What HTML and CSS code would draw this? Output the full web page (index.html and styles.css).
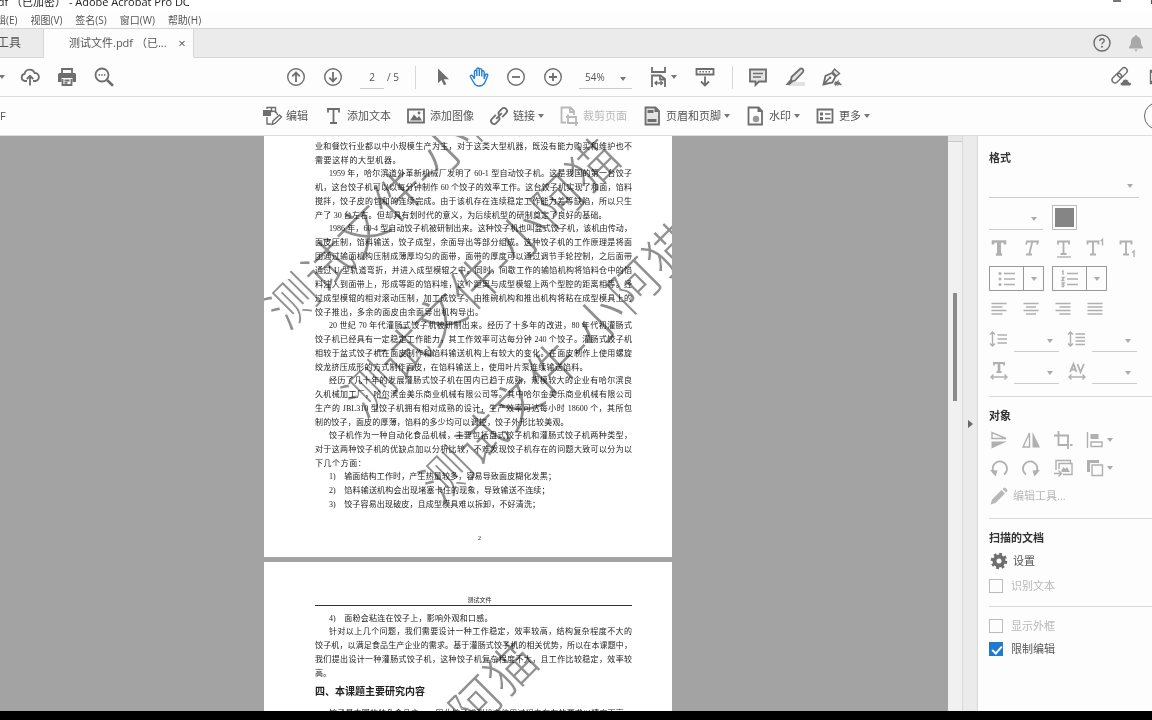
FILE: index.html
```html
<!DOCTYPE html>
<html lang="zh-CN">
<head>
<meta charset="utf-8">
<title>测试文件.pdf (已加密) - Adobe Acrobat Pro DC</title>
<link rel="stylesheet" href="styles.css">
</head>
<body>
<div class="app">
  <header class="titlebar">
    <span class="title">pdf （已加密） - Adobe Acrobat Pro DC</span>
    <span class="win"><i class="min"></i><i class="max"></i></span>
  </header>
  <nav class="menubar">
    <a href="#">辑(E)</a><a href="#">视图(V)</a><a href="#">签名(S)</a><a href="#">窗口(W)</a><a href="#">帮助(H)</a>
  </nav>
  <div class="tabbar">
    <button class="tab tools">工具</button>
    <div class="tab file"><span>测试文件.pdf （已...</span><button class="close" aria-label="关闭">×</button></div>
    <div class="account">
      <button class="ib" aria-label="帮助"><svg width="20" height="20" viewBox="0 0 20 20"><circle cx="10" cy="10" r="8" class="s"/><path class="s" d="M7.800 8q0-2.200 2.200-2.200T12.200 7.800q0 1-1.200 1.700-1 .6-1 1.800"/><circle cx="10" cy="13.800" r="1" class="f"/></svg></button>
      <button class="ib pale" aria-label="通知"><svg width="20" height="20" viewBox="0 0 20 20"><path class="f" d="M10 2q1.300 0 1.300 1.500Q15 4.500 15 9q0 4 2 5.500V15.500H3V14.500Q5 13 5 9q0-4.500 3.700-5.500Q8.700 2 10 2zM8 16.500h4L10 18.500z"/></svg></button>
    </div>
  </div>

  <div class="toolbar">
    <div class="group left">
      <button class="star caret" aria-label="收藏"></button>
      <button class="ib" aria-label="上传"><svg width="20" height="20" viewBox="0 0 20 20"><path class="s2" d="M7 14H4.800A3.600 3.600 0 0 1 4.600 6.900 5.200 5.200 0 0 1 14.600 6 4 4 0 0 1 15.200 14H13M10 18.500V9M6.800 12 10 8.800 13.200 12"/></svg></button>
      <button class="ib" aria-label="打印"><svg width="20" height="20" viewBox="0 0 20 20"><path class="s2" d="M5 6V2h10v4M5.500 12v6h9v-6M7.500 13.500h5M7.500 15.800h3"/><path class="f" d="M1 7.500Q1 6 2.500 6h15Q19 6 19 7.500V15h-3.500v-4h-11v4H1z"/></svg></button>
      <button class="ib" aria-label="查找"><svg width="20" height="20" viewBox="0 0 20 20"><circle cx="8" cy="8" r="6.500" class="s2"/><path class="s3" d="m13 13 6 5.700"/><path class="f" d="M4.500 7.200h1.600v1.600H4.500zM7.200 7.200h1.600v1.600H7.200zM9.900 7.200h1.600v1.600H9.900z"/></svg></button>
    </div>
    <div class="group nav">
      <button class="ib" aria-label="上一页"><svg width="20" height="20" viewBox="0 0 20 20"><circle cx="10" cy="10" r="8.300" class="s"/><path class="s2" d="M10 15V6M6.300 9.300 10 5.600l3.700 3.700"/></svg></button>
      <button class="ib" aria-label="下一页"><svg width="20" height="20" viewBox="0 0 20 20"><circle cx="10" cy="10" r="8.300" class="s"/><path class="s2" d="M10 5v9M6.300 10.700 10 14.400l3.700-3.700"/></svg></button>
    </div>
    <div class="pager"><input class="num-in" value="2" aria-label="页码"><span>/ 5</span></div>
    <i class="sep"></i>
    <div class="group view">
      <button class="ib" aria-label="选择"><svg width="20" height="20" viewBox="0 0 20 20"><path class="f" d="M6 1.500v14.800l3.500-3.200 2.500 5.200 2.300-1-2.500-5.100H17z"/></svg></button>
      <button class="ib blue" aria-label="手形"><svg width="20" height="20" viewBox="0 0 20 20"><path class="s" d="M5.500 11V4.500q0-1.200 1.100-1.200T7.800 4.500V9V2.300q0-1.300 1.200-1.300T10.300 2.300V9 2.800q0-1.200 1.200-1.200T12.800 2.800V9.500 5q0-1.200 1.100-1.200T15.200 5v7M15.200 11l1.400-3.300q.6-1 1.600-.5.9.5.5 1.500L16.500 14q-1.700 5-6.500 5-3.500 0-5-3L1.500 10q-.5-1.200.4-1.700 1-.4 1.800.6L5.500 12"/></svg></button>
      <button class="ib" aria-label="缩小"><svg width="20" height="20" viewBox="0 0 20 20"><circle cx="10" cy="10" r="8.300" class="s"/><path class="s2" d="M6 10h8"/></svg></button>
      <button class="ib" aria-label="放大"><svg width="20" height="20" viewBox="0 0 20 20"><circle cx="10" cy="10" r="8.300" class="s"/><path class="s2" d="M6 10h8M10 6v8"/></svg></button>
    </div>
    <label class="sel zoom"><select aria-label="缩放"><option>54%</option></select></label>
    <button class="ib wide caret" aria-label="适合宽度"><svg width="20" height="20" viewBox="0 0 20 20"><path class="s2" d="M3 0v5h13V0M3 20V8.500h8.500L16 12v8M11 9v3.500h5"/><path class="s" d="M6 16h7.500M8 14l-2 2 2 2M11.500 14l2 2-2 2"/></svg></button>
    <button class="ib" aria-label="滚动"><svg width="20" height="20" viewBox="0 0 20 20"><path class="s2" d="M1.500 2h17v5.500h-17zM10 9.500V18M6 14.500l4 4 4-4"/><path class="s" stroke-dasharray="1.500 1.500" d="M4.500 4.800h12"/></svg></button>
    <i class="sep"></i>
    <div class="group marks">
      <button class="ib" aria-label="注释"><svg width="20" height="20" viewBox="0 0 20 20"><path class="s2 tint" d="M2 2.500h16v12h-7L7.500 18v-3.500H2z"/><path class="s" d="M5 6.500h10M5 10h8"/></svg></button>
      <button class="ib" aria-label="荧光笔"><svg width="20" height="20" viewBox="0 0 20 20"><path class="shade" d="M8 15h12v4H3z"/><path class="s2 tint" d="m6.500 10 8.500-8q1.500-1 2.800.2Q19 3.500 18 5l-8 8.500-4 1z"/><path class="f" d="M5.500 12 8 15l-3.500 3H.500z"/></svg></button>
      <button class="ib" aria-label="签名"><svg width="20" height="20" viewBox="0 0 20 20"><path class="s2" d="M1.500 17.500 3.500 9l6.500-3L13.500 9.500 10.500 15.500zM2 17l5-5.500"/><path class="s tint" d="m10.500 5 2-3 5 4.500L14.500 9z"/><circle cx="8" cy="10.800" r="1.300" class="f"/><path class="s" d="m12.500 17.500 1.500-3v3l2-3v3l1.500-1.500.5 1.500h1.500"/></svg></button>
    </div>
    <div class="group share">
      <button class="ib" aria-label="共享链接"><svg width="20" height="20" viewBox="0 0 20 20"><g class="s" transform="rotate(-45 9 8)"><rect x="-1" y="5" width="11" height="6" rx="3"/><rect x="7" y="5" width="11" height="6" rx="3"/></g><path class="f" stroke="#fdfdfd" d="M11 19q-2-.2-2-2t2-2q.5-3 3.500-3t3.500 3q2.500 0 2.500 2t-2 2z"/></svg></button>
      <button class="ib" aria-label="邮件"><svg width="20" height="20" viewBox="0 0 20 20"><path class="s" d="M1.500 3.500h17v13h-17zM1.500 4l8.500 7 8.500-7M1.500 16l6-6.500"/></svg></button>
    </div>
  </div>

  <div class="editbar">
    <span class="pdf">F</span>
    <div class="tools-row">
      <button class="tb"><svg width="20" height="20" viewBox="0 0 20 20"><path class="s" d="M5 3V1.500h8.500V7M5 11v7h4M9.500 1.500V5.500q5-1 6 3.500M10 18.500l1-3.500 6.500-6 2 2L13 17.500z"/><path class="f" d="M1 4h8v6H1z"/></svg>编辑</button>
      <button class="tb"><svg width="20" height="20" viewBox="0 0 20 20"><path class="s2" d="M5 6.500V3h11v3.500M10.500 3v14M7 17h7"/></svg>添加文本</button>
      <button class="tb"><svg width="20" height="20" viewBox="0 0 20 20"><path class="s2" d="M2 3.500h16v13H2z"/><path class="f" d="m4 14.500 4-6 3.200 3.500 2-2 2.800 4.500z"/><circle cx="13" cy="7" r="1.400" class="f"/></svg>添加图像</button>
      <button class="tb caret"><svg width="20" height="20" viewBox="0 0 20 20"><g class="s2" transform="rotate(-45 10 10)"><path d="M8.500 7H3Q0 7 0 10t3 3h3q3 0 3-2M11.500 13H17q3 0 3-3t-3-3h-3q-3 0-3 2M6 10h8"/></g></svg>链接</button>
      <button class="tb off" disabled><svg width="20" height="20" viewBox="0 0 20 20"><path class="s2" d="M7 16.500H2.500v-15h9L15 5v4M11 2v4h4M9 8.500V17h10M7 11h10v9"/></svg>裁剪页面</button>
      <button class="tb caret"><svg width="20" height="20" viewBox="0 0 20 20"><path class="s2 tint" d="M3.500 1.500h10L17 5v13.500H3.500z"/><path class="f" d="M5.500 4h6v3h-6zM12.500 1v5h5zM5.500 13h9v3h-9z"/></svg>页眉和页脚</button>
      <button class="tb caret"><svg width="20" height="20" viewBox="0 0 20 20"><path class="s2" d="M3.500 1.500h10L17 5v13.500H3.500z"/><path class="f" d="M12.500 1v5h5z"/><circle cx="11" cy="13" r="3.200" fill="#999"/></svg>水印</button>
      <button class="tb caret"><svg width="20" height="20" viewBox="0 0 20 20"><path class="s2" d="M2.500 3.500h15v13h-15z"/><path class="f" d="M5 6.500h3v3H5zM5 11h3v3H5z"/><path class="s" d="M10 8h5.500M10 12.500h5.500"/></svg>更多</button>
    </div>
    <button class="round" aria-label="关闭工具"></button>
  </div>

  <main class="main">
    <section class="viewer">
      <article class="page first">
        <div class="p"><span class="line">但是由于结构复杂成本不高，等饺子机价格过大，难，难没有用，目前国内食品加工行</span><span class="line">业和餐饮行业都以中小规模生产为主，对于这类大型机器，既没有能力购买和维护也不</span><span class="line w26">需要这样的大型机器。</span></div>
        <div class="p"><span class="line in">1959 年，哈尔滨道外革新机械厂发明了 60-1 型自动饺子机。这是我国的第一台饺子</span><span class="line">机，这台饺子机可以以每分钟制作 60 个饺子的效率工作。这台饺子机实现了和面，馅料</span><span class="line">搅拌，饺子皮的包和的连续完成。由于该机存在连续稳定工作能力差等缺陷，所以只生</span><span class="line w91">产了 30 台左右。但却具有划时代的意义，为后续机型的研制奠定了良好的基础。</span></div>
        <div class="p"><span class="line in">1986 年，60-4 型自动饺子机被研制出来。这种饺子机也叫盆式饺子机，该机由传动，</span><span class="line">面皮压制，馅料输送，饺子成型，余面导出等部分组成。这种饺子机的工作原理是将面</span><span class="line">团通过输面机构压制成薄厚均匀的面带，面带的厚度可以通过调节手轮控制，之后面带</span><span class="line">通过 U 型轨道弯折，并进入成型模辊之中。同时，间歇工作的输馅机构将馅料仓中的馅</span><span class="line">料注入到面带上，形成等距的馅料堆，这个距离与成型模辊上两个型腔的距离相等。经</span><span class="line">过成型模辊的相对滚动压制，加工成饺子。由推碗机构和推出机构将粘在成型模具上的</span><span class="line w52">饺子推出，多余的面皮由余面导出机构导出。</span></div>
        <div class="p"><span class="line in">20 世纪 70 年代灌肠式饺子机被研制出来。经历了十多年的改进，80 年代初灌肠式</span><span class="line">饺子机已经具有一定稳定工作能力，其工作效率可达每分钟 240 个饺子。灌肠式饺子机</span><span class="line">相较于盆式饺子机在面皮制作和馅料输送机构上有较大的变化。在面皮制作上使用螺旋</span><span class="line w85">绞龙挤压成形的方式制作面皮，在馅料输送上，使用叶片泵连续输送馅料。</span></div>
        <div class="p"><span class="line in">经历了几十年的发展灌肠式饺子机在国内已趋于成熟，规模较大的企业有哈尔滨良</span><span class="line">久机械加工厂，哈尔滨金美乐商业机械有限公司等。其中哈尔金美乐商业机械有限公司</span><span class="line">生产的 JBL310 型饺子机拥有相对成熟的设计，生产效率可达每小时 18600 个，其所包</span><span class="line w80">制的饺子，面皮的厚薄，馅料的多少均可以调控，饺子外形比较美观。</span></div>
        <div class="p"><span class="line in">饺子机作为一种自动化食品机械，主要包括盘式饺子机和灌肠式饺子机两种类型，</span><span class="line">对于这两种饺子机的优缺点加以分析比较，不难发现饺子机存在的问题大致可以分为以</span><span class="line w15">下几个方面：</span></div>
        <div class="p"><span class="line in w76"><b class="n">1)</b>输面结构工作时，产生热量较多，容易导致面皮糊化发黑；</span><span class="line in w73"><b class="n">2)</b>馅料输送机构会出现堵塞卡住的现象，导致输送不连续；</span><span class="line in w70"><b class="n">3)</b>饺子容易出现破皮，且成型模具难以拆卸，不好清洗；</span></div>
        <div class="folio">2</div>
        <span class="mark m1">测试文件-小阿猫</span>
        <span class="mark m2">测试文件-小阿猫</span>
        <span class="mark m3">测试文件-小阿猫</span>
      </article>
      <article class="page second">
        <div class="running">测试文件</div>
        <div class="p"><span class="line in w55"><b class="n">4)</b>面粉会粘连在饺子上，影响外观和口感。</span></div>
        <div class="p"><span class="line in">针对以上几个问题，我们需要设计一种工作稳定，效率较高，结构复杂程度不大的</span><span class="line">饺子机，以满足食品生产企业的需求。基于灌肠式饺子机的相关优势，所以在本课题中，</span><span class="line">我们提出设计一种灌肠式饺子机，这种饺子机复杂程度不大，且工作比较稳定，效率较</span><span class="line w5">高。</span></div>
        <h2>四、本课题主要研究内容</h2>
        <div class="p"><span class="line in">饺子是中国的特色食品之一，因此饺子成型机在使用过程中存在的要求以精度不高，</span></div>
        <span class="mark m4">测试文件-小阿猫</span>
      </article>
    </section>
    <div class="scroll"><i class="knob"></i><i class="thumb"></i></div>
    <button class="split" aria-label="收起面板"></button>
    <aside class="panel">
      <h3>格式</h3>
      <label class="sel font"><select aria-label="字体" disabled><option></option></select></label>
      <div class="row size"><label class="sel short"><select aria-label="字号" disabled><option></option></select></label><button class="swatch" aria-label="颜色"><i></i></button></div>
      <div class="row icons">
        <button class="ib" aria-label="粗体"><svg width="20" height="20" viewBox="0 0 20 20"><path class="s3" d="M4 6.500V3.500h12v3M7 16.500h6"/><path class="s4" d="M10 3v14"/></svg></button>
        <button class="ib" aria-label="斜体"><svg width="20" height="20" viewBox="0 0 20 20"><path class="s2" d="M5 6.500 6 3.500h11l-1 3M11.500 3 8 17M5 16.500h6"/></svg></button>
        <button class="ib" aria-label="下划线"><svg width="20" height="20" viewBox="0 0 20 20"><path class="s2" d="M5 6.500V3.500h11v3M10.500 3v13M7.500 16h6"/><path class="s" d="M4 19h14"/></svg></button>
        <button class="ib" aria-label="上标"><svg width="20" height="20" viewBox="0 0 20 20"><path class="s2" d="M2.500 6.500V3.500h11v3M8 3.500v13M5 16.500h6"/><path class="s" d="m15.500 3 2-1.500v6"/></svg></button>
        <button class="ib" aria-label="下标"><svg width="20" height="20" viewBox="0 0 20 20"><path class="s2" d="M3.500 6.500V3.500h11v3M9 3.500v13M6 16.500h6"/><path class="s" d="m15 14.500 2-1.500v6"/></svg></button>
      </div>
      <div class="row lists">
        <div class="combo"><button aria-label="项目符号"><svg width="20" height="20" viewBox="0 0 20 20"><path class="s" d="M7 4.500h11M7 10h11M7 15.500h11"/><circle cx="3" cy="4.500" r="1.500" class="f"/><circle cx="3" cy="10" r="1.500" class="f"/><circle cx="3" cy="15.500" r="1.500" class="f"/></svg></button><button class="dd" aria-label="更多项目符号"></button></div>
        <div class="combo"><button aria-label="编号"><svg width="20" height="20" viewBox="0 0 20 20"><path class="s" d="M7 4.500h11M7 10h11M7 15.500h11M2 2.800 3 2v4M1.500 8.500h2.500L2 11.500h2.500M1.500 14h2.500l-1.500 1.500L4 16l-.5 1.500h-2"/></svg></button><button class="dd" aria-label="更多编号"></button></div>
      </div>
      <div class="row icons">
        <button class="ib" aria-label="左对齐"><svg width="20" height="20" viewBox="0 0 20 20"><path class="s" d="M2.500 4.500h15M2.500 8h11M2.500 11.500h15M2.500 15h11"/></svg></button>
        <button class="ib" aria-label="居中"><svg width="20" height="20" viewBox="0 0 20 20"><path class="s" d="M2.500 4.500h15M5 8h10M2.500 11.500h15M5 15h10"/></svg></button>
        <button class="ib" aria-label="右对齐"><svg width="20" height="20" viewBox="0 0 20 20"><path class="s" d="M2.500 4.500h15M6.500 8h11M2.500 11.500h15M6.500 15h11"/></svg></button>
        <button class="ib" aria-label="两端对齐"><svg width="20" height="20" viewBox="0 0 20 20"><path class="s" d="M2.500 4.500h15M2.500 8h15M2.500 11.500h15M2.500 15h15"/></svg></button>
      </div>
      <div class="row metrics tall">
        <svg width="20" height="20" viewBox="0 0 20 20"><path class="s" d="M3.500 3v14M1 5.500 3.500 3 6 5.500M1 14.500 3.500 17 6 14.500M8.500 6H18M8.500 10H18M8.500 14H18"/></svg><label class="sel mini"><select aria-label="行距" disabled><option></option></select></label>
        <svg width="20" height="20" viewBox="0 0 20 20"><path class="s" d="M3.500 3v14M1 5.500 3.500 3 6 5.500M1 14.500 3.500 17 6 14.500M8.500 5H18M8.500 8.500H18M8.500 12H18M8.500 15.500H18"/></svg><label class="sel mini"><select aria-label="段距" disabled><option></option></select></label>
      </div>
      <div class="row metrics">
        <svg width="20" height="20" viewBox="0 0 20 20"><path class="s2" d="M5 4.500V2h10v2.500M7.500 11h5"/><path class="s3" d="M10 2v9.500"/><path class="s" d="M2 16h16M4.500 13.500 2 16l2.500 2.500M15.500 13.500 18 16l-2.500 2.500"/></svg><label class="sel mini"><select aria-label="水平缩放" disabled><option></option></select></label>
        <svg width="20" height="20" viewBox="0 0 20 20"><path class="s2" d="M3 11 6.500 3l3 8M4 8.500h5M10.500 3l3 8L17 3"/><path class="s" d="M2 16h16M4.500 13.500 2 16l2.500 2.500M15.500 13.500 18 16l-2.500 2.500"/></svg><label class="sel mini"><select aria-label="字距" disabled><option></option></select></label>
      </div>
      <hr class="far">
      <h3>对象</h3>
      <div class="row icons">
        <button class="ib" aria-label="垂直翻转"><svg width="20" height="20" viewBox="0 0 20 20"><path class="s" d="M3 2.500v6h14z"/><path class="f" d="M2.500 11.500H18L2.500 18.500z"/></svg></button>
        <button class="ib" aria-label="水平翻转"><svg width="20" height="20" viewBox="0 0 20 20"><path class="s" d="M8.500 3v14H2z"/><path class="f" d="M11.500 2 19 17.500h-7.500z"/></svg></button>
        <button class="ib" aria-label="裁剪"><svg width="20" height="20" viewBox="0 0 20 20"><path class="s2" d="M5.500 1v14H15M1 5.500h14V19M17 15h2.500"/></svg></button>
        <button class="ib wide caret" aria-label="对齐对象"><svg width="20" height="20" viewBox="0 0 20 20"><path class="s" d="M2.500 2v16M6 12h11v4.500H6z"/><path class="f" d="M5.500 4h8v5h-8z"/></svg></button>
      </div>
      <div class="row icons deep">
        <button class="ib" aria-label="逆时针旋转"><svg width="20" height="20" viewBox="0 0 20 20"><path class="s2" d="M15 16.500A7.200 7.200 0 1 0 4.500 14"/><path class="f" d="m1 12 7.500.5-2 6z"/></svg></button>
        <button class="ib" aria-label="顺时针旋转"><svg width="20" height="20" viewBox="0 0 20 20"><path class="s2" d="M5 16.500A7.200 7.200 0 1 1 15.500 14"/><path class="f" d="m19 12-7.500.5 2 6z"/></svg></button>
        <button class="ib" aria-label="替换图像"><svg width="20" height="20" viewBox="0 0 20 20"><path class="s" d="M3 12V2.500h14.500V5M10 16.500h9V5.500H6V11M1 15.500h7M5.500 12.500l3 3-3 3"/><path class="f" d="m8 13 2.500-4 2 2 1.500-2 3 5H9z"/></svg></button>
        <button class="ib wide caret" aria-label="排列"><svg width="20" height="20" viewBox="0 0 20 20"><path class="f" d="M2 2h12v3H5v9H2z"/><path class="s" d="M7 7h10.500v10.500H7z"/></svg></button>
      </div>
      <button class="act off" disabled><svg width="20" height="20" viewBox="0 0 20 20"><path class="f" d="m1.500 18.500 1.500-5L12.500 4 16 7.500 6.500 17zM13.500 3l1-1q1-.8 2 0L18 3.500q1 1 0 2l-1 1z"/></svg>编辑工具...</button>
      <hr>
      <h3>扫描的文档</h3>
      <button class="act set"><svg width="20" height="20" viewBox="0 0 20 20"><circle cx="10" cy="10" r="4.500" class="s4"/><circle cx="10" cy="10" r="7" class="s3" stroke-dasharray="2.800 2.700"/></svg>设置</button>
      <label class="check off ocr"><input type="checkbox" disabled>识别文本</label>
      <hr class="near">
      <label class="check off box"><input type="checkbox" disabled>显示外框</label>
      <label class="check"><input type="checkbox" checked>限制编辑</label>
    </aside>
  </main>
  <footer class="bottom"></footer>
</div>
</body>
</html>
```

FILE: styles.css
```css
* { box-sizing: border-box; }
body {
  margin: 0;
  font: 11px/16px "Open Sans", "Noto Sans CJK SC", sans-serif;
  color: #555;
  background: #fdfdfd;
}
button, input, select { font: inherit; color: inherit; border: 0; background: none; padding: 0; margin: 0; border-radius: 0; }
.app { height: 100vh; display: flex; flex-direction: column; overflow: hidden; }

/* Icons */
svg { display: block; flex: none; color: #6e6e6e; overflow: visible; }
.s, .s2, .s3, .s4 { fill: none; stroke: currentColor; stroke-width: 1.4; }
.s2 { stroke-width: 1.8; }
.s3 { stroke-width: 2.6; }
.s4 { stroke-width: 4; }
.f { fill: currentColor; }
.tint { fill: #e4e4e4; }
.shade { fill: #e2e2e2; }
.ib { width: 24px; height: 24px; flex: none; display: flex; align-items: center; justify-content: center; }
.blue svg { color: #2680d0; }
.pale svg { color: #a8a8a8; }
.wide { width: 36px; justify-content: flex-start; padding-left: 2px; gap: 2px; }
.caret::after, .dd::after, .sel::after {
  content: "";
  flex: none;
  border: solid transparent;
  border-width: 4px 3px 0;
  border-top-color: #777;
}

/* Window chrome */
.titlebar { height: 12px; flex: none; background: #fff; display: flex; justify-content: space-between; align-items: flex-end; overflow: hidden; color: #222; }
.title { margin-left: -9px; white-space: pre; line-height: 20px; }
.win { display: flex; gap: 30px; align-self: flex-start; }
.min { width: 8px; height: 2px; background: #777; }
.max { width: 1px; height: 4px; background: #555; }
.menubar { height: 16px; flex: none; display: flex; gap: 13px; margin-left: -4px; font-size: 10px; }
.menubar a { color: #555; text-decoration: none; }
.tabbar { height: 30px; flex: none; display: flex; background: #ebebeb; border-top: 1px solid #d6d6d6; }
.tab { display: flex; align-items: center; border-right: 1px solid #d6d6d6; border-bottom: 1px solid #d6d6d6; }
.tools { width: 47px; margin-left: -3px; font-size: 12px; }
.file { width: 150px; padding: 0 6px 0 25px; justify-content: space-between; background: #fdfdfd; border-bottom-color: #fdfdfd; white-space: nowrap; }
.close { width: 10px; font-size: 13px; }
.account { flex: 1; display: flex; justify-content: flex-end; align-items: center; gap: 10px; padding-right: 4px; border-bottom: 1px solid #d6d6d6; }

/* Main toolbar */
.toolbar { height: 39px; flex: none; display: flex; align-items: center; border-bottom: 1px solid #dcdcdc; overflow: hidden; }
.group { display: flex; gap: 13px; flex: none; }
.left { align-items: center; }
.star { width: 5px; display: flex; justify-content: flex-end; }
.nav { margin-left: 168px; }
.pager { display: flex; margin-left: 15px; gap: 3px; height: 24px; align-items: center; font-size: 10px; }
.num-in { width: 24px; height: 24px; text-align: center; border-bottom: 1px solid #ccc; }
.sep { width: 1px; height: 23px; background: #d8d8d8; flex: none; }
.pager + .sep { margin-left: 16px; }
.view { margin-left: 14px; }
.sel { position: relative; display: flex; flex: none; border-bottom: 1px solid #ccc; }
.sel::after { position: absolute; right: 6px; top: 50%; border-top-color: #aaa; pointer-events: none; }
.sel select { width: 100%; appearance: none; opacity: 1; }
.zoom { width: 53px; height: 24px; margin: 0 15px 0 14px; padding-left: 6px; font-size: 10px; }
.zoom::after { border-top-color: #777; }
.wide + .ib { margin-left: 10px; }
.ib + .sep { margin-left: 15px; }
.marks { margin-left: 13px; }
.share { margin-left: auto; margin-right: -19px; gap: 14px; }

/* Edit toolbar */
.editbar { height: 39px; flex: none; display: flex; align-items: center; border-bottom: 1px solid #dcdcdc; overflow: hidden; }
.pdf { width: 262px; flex: none; }
.tools-row { display: flex; gap: 15px; }
.tb { display: flex; align-items: center; white-space: nowrap; }
.tb svg { margin-right: 4px; }
.tb.caret::after { margin-left: 3px; }
.off, .off svg { color: #b8b8b8; }
.round { width: 28px; height: 28px; flex: none; border: 1px solid #666; border-radius: 50%; margin-left: auto; margin-right: -20px; }

/* Document */
.main { flex: 1; min-height: 0; display: flex; }
.viewer { flex: 1; min-width: 0; overflow: hidden; background: #a3a3a3; display: flex; flex-direction: column; align-items: center; gap: 5px; padding-right: 12px; }
.page { position: relative; width: 408px; flex: none; background: #fff; padding: 0 40px 12px 51px; overflow: hidden; color: #222; font: 8px/14px "Liberation Serif", "Noto Sans CJK SC", serif; }
.first { margin-top: -10px; }
.second { padding-top: 33px; }
.p + .p { margin-top: -1px; }
.line { display: block; text-align: justify; text-align-last: justify; white-space: nowrap; }
.in { padding-left: 14px; }
.n { display: inline-block; width: 15px; font-weight: 400; text-align-last: left; }
.w5 { width: 5%; } .w15 { width: 16%; } .w26 { width: 27%; } .w52 { width: 53%; } .w55 { width: 56%; }
.w70 { width: 71%; } .w73 { width: 74%; } .w76 { width: 76%; } .w80 { width: 80%; } .w85 { width: 86%; } .w91 { width: 92%; }
.folio, .running { padding-left: 12px; text-align: center; font-size: 6px; }
.folio { margin-top: 19px; }
.running { line-height: 10px; border-bottom: 1px solid #333; margin-bottom: 6px; }
.page h2 { margin: 0 0 6px; font: bold 10px/20px "Noto Sans CJK SC", sans-serif; }
/* The white outline slims the strokes; multiply leaves the text below visible */
.mark { position: absolute; width: 400px; margin: -40px 0 0 -200px; font-size: 50px; line-height: 80px; text-align: center; white-space: nowrap; color: #909090; -webkit-text-stroke: 1px #fff; mix-blend-mode: multiply; transform: rotate(-45deg); pointer-events: none; }
.m1 { left: 141px; top: 64px; }
.m2 { left: 218px; top: 152px; }
.m3 { left: 295px; top: 237px; }
.m4 { left: 136px; top: 219px; }

.scroll { width: 15px; flex: none; background: #f1f1f1; border-right: 1px solid #d8d8dc; display: flex; flex-direction: column; }
.knob { height: 6px; background: #e6e6e6; border-bottom: 1px solid #c8c8c8; }
.thumb { width: 4px; height: 108px; margin: 151px 0 0 5px; background: #8c8c8c; }
.split { width: 15px; flex: none; background: #ebebeb; border-right: 1px solid #d8d8d8; display: flex; align-items: center; justify-content: center; }
.split::after { content: ""; border: solid transparent; border-width: 4px 0 4px 5px; border-left-color: #666; }

/* Side panel */
.panel { width: 174px; flex: none; padding: 10px 0 0 11px; background: #fdfdfd; overflow: hidden; }
.panel h3 { margin: 0; font: bold 11px/24px "Open Sans", "Noto Sans CJK SC", sans-serif; color: #333; }
.panel .row svg { color: #b0b0b0; }
.panel .caret::after, .dd::after { border-top-color: #aaa; }
.row { display: flex; align-items: center; }
.font { width: 150px; height: 28px; }
.size { height: 38px; gap: 9px; }
.short { width: 54px; height: 26px; }
.swatch { width: 25px; height: 25px; border: 1px solid #bbb; padding: 2px; }
.swatch i { display: block; height: 100%; background: #858585; }
.icons { height: 24px; margin-left: -2px; gap: 8px; }
.deep { height: 32px; }
.lists { height: 37px; gap: 8px; }
.combo { display: flex; width: 55px; height: 25px; border: 1px solid #999; }
.combo button { flex: 1; display: flex; align-items: center; justify-content: center; }
.combo .dd { flex: none; width: 20px; border-left: 1px solid #999; }
.metrics { height: 28px; gap: 5px; }
.metrics.tall { height: 36px; }
.mini { width: 45px; height: 25px; }
.mini + svg { margin-left: 3px; }
hr { border: 0; height: 1px; background: #d8d8d8; margin: 10px 0 7px; }
.far { margin-top: 11px; }
.near { margin-top: 6px; }
.act { display: flex; align-items: center; gap: 4px; height: 24px; }
.set { height: 22px; }
.check { display: flex; align-items: center; gap: 8px; height: 22px; }
.ocr { height: 28px; }
.box { height: 24px; }
.check input { appearance: none; width: 14px; height: 14px; border: 1px solid #bbb; position: relative; }
.check input:checked { background: #1f7bd0; border-color: #1f7bd0; }
.check input:checked::after { content: ""; position: absolute; left: 4px; top: 1px; width: 4px; height: 8px; border: solid #fff; border-width: 0 2px 2px 0; transform: rotate(42deg); }
.bottom { height: 9px; flex: none; background: #000; }
```
